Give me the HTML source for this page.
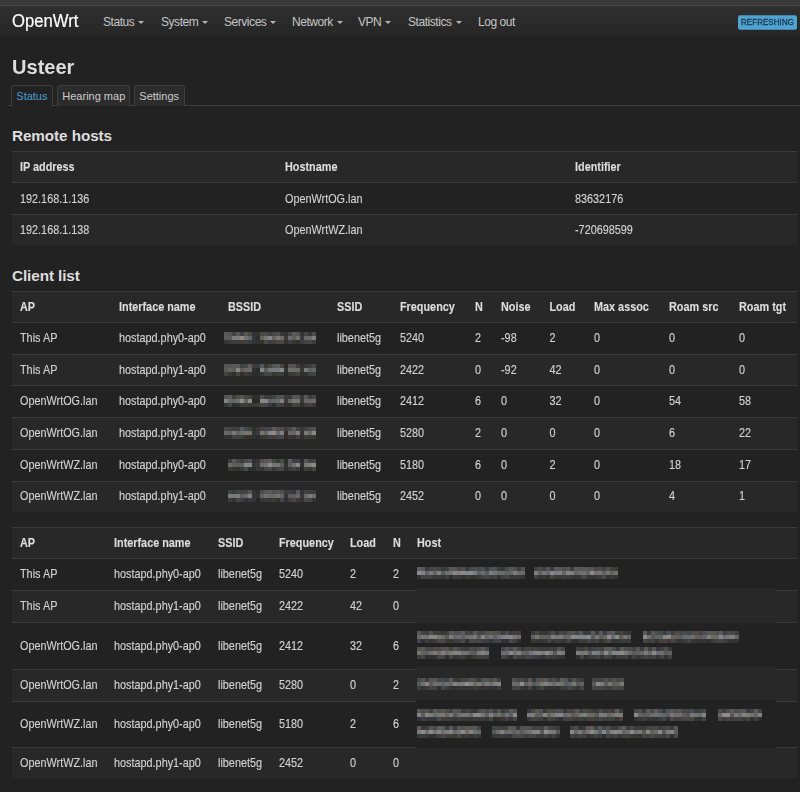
<!DOCTYPE html><html><head><meta charset="utf-8"><style>*{box-sizing:border-box;margin:0;padding:0}
html,body{width:800px;height:792px;overflow:hidden}
body{background:#222;color:#d2d2d2;font-family:"Liberation Sans",sans-serif;font-size:10.85px;position:relative}
.topband{position:absolute;left:0;top:0;width:800px;height:5px;background:#393939}
.topline{position:absolute;left:0;top:5px;width:800px;height:1px;background:#4a4a4a}
.nav{position:absolute;left:0;top:6px;width:800px;height:31px;background:linear-gradient(#2f2f2f,#262626)}
.brand{position:absolute;left:12px;top:10px;font-size:18.7px;color:#fff;line-height:22px;transform:scaleX(0.893);transform-origin:0 0;-webkit-text-stroke:0.2px #fff}
.nl{position:absolute;top:15px;font-size:12px;letter-spacing:-0.45px;color:#c6c6c6;line-height:14px;white-space:nowrap}
.caret{display:inline-block;width:0;height:0;border-left:3px solid transparent;border-right:3px solid transparent;border-top:3px solid #b4b4b4;vertical-align:middle;margin-left:4px;margin-top:-1px}
.badge{position:absolute;left:738px;top:16px;width:59px;height:13px;background:#4ea3d2;border-radius:2px;color:#1b3446;font-size:7.9px;font-weight:normal;line-height:14px;text-align:center;letter-spacing:0.12px;-webkit-text-stroke:0.25px #1b3446;transform:scaleY(1.1)}
h2{position:absolute;left:12px;top:54.7px;font-size:21px;transform:scaleX(0.955);transform-origin:0 0;font-weight:bold;color:#ddd;line-height:24px}
.tabline{position:absolute;left:8px;top:105px;width:792px;height:1px;background:#3e3e3e}
.tab{position:absolute;top:85px;height:21px;border:1px solid #3e3e3e;border-bottom:none;border-radius:3px 3px 0 0;background:#2c2c2c;color:#ccc;font-size:11px;line-height:21px;padding:0 0 0 4.3px;white-space:nowrap}
.tab.active{background:#222;color:#4a9fd0;height:21px}
h3{position:absolute;left:12px;font-size:15.3px;letter-spacing:-0.1px;font-weight:bold;color:#ddd;line-height:18px}
.tbl{position:absolute;left:12px;top:0;width:785px}
.row{position:absolute;left:0;width:785px;border-top:1px solid #3b3b3b}
.row.alt{background:#282828}
.row.hd{background:#282828}
.c{position:absolute;white-space:nowrap;line-height:14px;-webkit-text-stroke:0.12px currentColor;transform:scaleY(1.12);transform-origin:0 10.76px}
.hd .c{font-weight:bold;color:#ddd}
.blur{position:absolute;background:#4b4b4b;filter:blur(1px)}
</style></head><body>
<div class="topband"></div><div class="topline"></div><div class="nav"></div>
<div class="brand">OpenWrt</div>
<div class="nl" style="left:103px">Status<span class="caret"></span></div>
<div class="nl" style="left:161px">System<span class="caret"></span></div>
<div class="nl" style="left:224px">Services<span class="caret"></span></div>
<div class="nl" style="left:292px">Network<span class="caret"></span></div>
<div class="nl" style="left:358px">VPN<span class="caret"></span></div>
<div class="nl" style="left:408px">Statistics<span class="caret"></span></div>
<div class="nl" style="left:478px">Log out</div>
<div class="badge">REFRESHING</div>
<h2>Usteer</h2><div class="tabline"></div>
<div class="tab active" style="left:11px;width:42px">Status</div>
<div class="tab" style="left:57px;width:73px">Hearing map</div>
<div class="tab" style="left:134px;width:51px">Settings</div>
<h3 style="top:127px">Remote hosts</h3>
<h3 style="top:267px">Client list</h3>
<div class="tbl">
<div class="row hd" style="top:151.4px;height:31.0px">
<div class="c" style="left:8px;top:7.60px">IP address</div>
<div class="c" style="left:273px;top:7.60px">Hostname</div>
<div class="c" style="left:563px;top:7.60px">Identifier</div>
</div>
<div class="row" style="top:182.4px;height:32.0px">
<div class="c" style="left:8px;top:8.20px">192.168.1.136</div>
<div class="c" style="left:273px;top:8.20px">OpenWrtOG.lan</div>
<div class="c" style="left:563px;top:8.20px">83632176</div>
</div>
<div class="row alt" style="top:214.4px;height:30.599999999999994px">
<div class="c" style="left:8px;top:7.50px">192.168.1.138</div>
<div class="c" style="left:273px;top:7.50px">OpenWrtWZ.lan</div>
<div class="c" style="left:563px;top:7.50px">-720698599</div>
</div>
</div>
<div class="tbl">
<div class="row hd" style="top:291.3px;height:30.69999999999999px">
<div class="c" style="left:8px;top:7.45px">AP</div>
<div class="c" style="left:107px;top:7.45px">Interface name</div>
<div class="c" style="left:216px;top:7.45px">BSSID</div>
<div class="c" style="left:325px;top:7.45px">SSID</div>
<div class="c" style="left:388px;top:7.45px">Frequency</div>
<div class="c" style="left:463px;top:7.45px">N</div>
<div class="c" style="left:489px;top:7.45px">Noise</div>
<div class="c" style="left:537.5px;top:7.45px">Load</div>
<div class="c" style="left:582px;top:7.45px">Max assoc</div>
<div class="c" style="left:657px;top:7.45px">Roam src</div>
<div class="c" style="left:727px;top:7.45px">Roam tgt</div>
</div>
<div class="row" style="top:322px;height:31.69999999999999px">
<div class="c" style="left:8px;top:8.05px">This AP</div>
<div class="c" style="left:107px;top:8.05px">hostapd.phy0-ap0</div>
<div class="c" style="left:325px;top:8.05px">libenet5g</div>
<div class="c" style="left:388px;top:8.05px">5240</div>
<div class="c" style="left:463px;top:8.05px">2</div>
<div class="c" style="left:489px;top:8.05px">-98</div>
<div class="c" style="left:537.5px;top:8.05px">2</div>
<div class="c" style="left:582px;top:8.05px">0</div>
<div class="c" style="left:657px;top:8.05px">0</div>
<div class="c" style="left:727px;top:8.05px">0</div>
</div>
<div class="row alt" style="top:353.7px;height:31.69999999999999px">
<div class="c" style="left:8px;top:8.05px">This AP</div>
<div class="c" style="left:107px;top:8.05px">hostapd.phy1-ap0</div>
<div class="c" style="left:325px;top:8.05px">libenet5g</div>
<div class="c" style="left:388px;top:8.05px">2422</div>
<div class="c" style="left:463px;top:8.05px">0</div>
<div class="c" style="left:489px;top:8.05px">-92</div>
<div class="c" style="left:537.5px;top:8.05px">42</div>
<div class="c" style="left:582px;top:8.05px">0</div>
<div class="c" style="left:657px;top:8.05px">0</div>
<div class="c" style="left:727px;top:8.05px">0</div>
</div>
<div class="row" style="top:385.4px;height:31.700000000000045px">
<div class="c" style="left:8px;top:8.05px">OpenWrtOG.lan</div>
<div class="c" style="left:107px;top:8.05px">hostapd.phy0-ap0</div>
<div class="c" style="left:325px;top:8.05px">libenet5g</div>
<div class="c" style="left:388px;top:8.05px">2412</div>
<div class="c" style="left:463px;top:8.05px">6</div>
<div class="c" style="left:489px;top:8.05px">0</div>
<div class="c" style="left:537.5px;top:8.05px">32</div>
<div class="c" style="left:582px;top:8.05px">0</div>
<div class="c" style="left:657px;top:8.05px">54</div>
<div class="c" style="left:727px;top:8.05px">58</div>
</div>
<div class="row alt" style="top:417.1px;height:31.69999999999999px">
<div class="c" style="left:8px;top:8.05px">OpenWrtOG.lan</div>
<div class="c" style="left:107px;top:8.05px">hostapd.phy1-ap0</div>
<div class="c" style="left:325px;top:8.05px">libenet5g</div>
<div class="c" style="left:388px;top:8.05px">5280</div>
<div class="c" style="left:463px;top:8.05px">2</div>
<div class="c" style="left:489px;top:8.05px">0</div>
<div class="c" style="left:537.5px;top:8.05px">0</div>
<div class="c" style="left:582px;top:8.05px">0</div>
<div class="c" style="left:657px;top:8.05px">6</div>
<div class="c" style="left:727px;top:8.05px">22</div>
</div>
<div class="row" style="top:448.8px;height:31.69999999999999px">
<div class="c" style="left:8px;top:8.05px">OpenWrtWZ.lan</div>
<div class="c" style="left:107px;top:8.05px">hostapd.phy0-ap0</div>
<div class="c" style="left:325px;top:8.05px">libenet5g</div>
<div class="c" style="left:388px;top:8.05px">5180</div>
<div class="c" style="left:463px;top:8.05px">6</div>
<div class="c" style="left:489px;top:8.05px">0</div>
<div class="c" style="left:537.5px;top:8.05px">2</div>
<div class="c" style="left:582px;top:8.05px">0</div>
<div class="c" style="left:657px;top:8.05px">18</div>
<div class="c" style="left:727px;top:8.05px">17</div>
</div>
<div class="row alt" style="top:480.5px;height:31.5px">
<div class="c" style="left:8px;top:7.95px">OpenWrtWZ.lan</div>
<div class="c" style="left:107px;top:7.95px">hostapd.phy1-ap0</div>
<div class="c" style="left:325px;top:7.95px">libenet5g</div>
<div class="c" style="left:388px;top:7.95px">2452</div>
<div class="c" style="left:463px;top:7.95px">0</div>
<div class="c" style="left:489px;top:7.95px">0</div>
<div class="c" style="left:537.5px;top:7.95px">0</div>
<div class="c" style="left:582px;top:7.95px">0</div>
<div class="c" style="left:657px;top:7.95px">4</div>
<div class="c" style="left:727px;top:7.95px">1</div>
</div>
</div>
<div class="tbl">
<div class="row hd" style="top:527.4px;height:30.600000000000023px">
<div class="c" style="left:8px;top:7.40px">AP</div>
<div class="c" style="left:102px;top:7.40px">Interface name</div>
<div class="c" style="left:206px;top:7.40px">SSID</div>
<div class="c" style="left:267px;top:7.40px">Frequency</div>
<div class="c" style="left:338px;top:7.40px">Load</div>
<div class="c" style="left:381px;top:7.40px">N</div>
<div class="c" style="left:405px;top:7.40px">Host</div>
</div>
<div class="row" style="top:558px;height:32.39999999999998px">
<div class="c" style="left:8px;top:8.40px">This AP</div>
<div class="c" style="left:102px;top:8.40px">hostapd.phy0-ap0</div>
<div class="c" style="left:206px;top:8.40px">libenet5g</div>
<div class="c" style="left:267px;top:8.40px">5240</div>
<div class="c" style="left:338px;top:8.40px">2</div>
<div class="c" style="left:381px;top:8.40px">2</div>
</div>
<div class="row alt" style="top:590.4px;height:31.600000000000023px">
<div class="c" style="left:8px;top:8.00px">This AP</div>
<div class="c" style="left:102px;top:8.00px">hostapd.phy1-ap0</div>
<div class="c" style="left:206px;top:8.00px">libenet5g</div>
<div class="c" style="left:267px;top:8.00px">2422</div>
<div class="c" style="left:338px;top:8.00px">42</div>
<div class="c" style="left:381px;top:8.00px">0</div>
</div>
<div class="row" style="top:622px;height:46.60000000000002px">
<div class="c" style="left:8px;top:15.50px">OpenWrtOG.lan</div>
<div class="c" style="left:102px;top:15.50px">hostapd.phy0-ap0</div>
<div class="c" style="left:206px;top:15.50px">libenet5g</div>
<div class="c" style="left:267px;top:15.50px">2412</div>
<div class="c" style="left:338px;top:15.50px">32</div>
<div class="c" style="left:381px;top:15.50px">6</div>
</div>
<div class="row alt" style="top:668.6px;height:32.19999999999993px">
<div class="c" style="left:8px;top:8.30px">OpenWrtOG.lan</div>
<div class="c" style="left:102px;top:8.30px">hostapd.phy1-ap0</div>
<div class="c" style="left:206px;top:8.30px">libenet5g</div>
<div class="c" style="left:267px;top:8.30px">5280</div>
<div class="c" style="left:338px;top:8.30px">0</div>
<div class="c" style="left:381px;top:8.30px">2</div>
</div>
<div class="row" style="top:700.8px;height:46.5px">
<div class="c" style="left:8px;top:15.45px">OpenWrtWZ.lan</div>
<div class="c" style="left:102px;top:15.45px">hostapd.phy0-ap0</div>
<div class="c" style="left:206px;top:15.45px">libenet5g</div>
<div class="c" style="left:267px;top:15.45px">5180</div>
<div class="c" style="left:338px;top:15.45px">2</div>
<div class="c" style="left:381px;top:15.45px">6</div>
</div>
<div class="row alt" style="top:747.3px;height:31.100000000000023px">
<div class="c" style="left:8px;top:7.75px">OpenWrtWZ.lan</div>
<div class="c" style="left:102px;top:7.75px">hostapd.phy1-ap0</div>
<div class="c" style="left:206px;top:7.75px">libenet5g</div>
<div class="c" style="left:267px;top:7.75px">2452</div>
<div class="c" style="left:338px;top:7.75px">0</div>
<div class="c" style="left:381px;top:7.75px">0</div>
</div>
</div>
<div style="position:absolute;left:416px;top:559px;width:360px;height:28.5px;background:#222"></div>
<div style="position:absolute;left:416px;top:587.5px;width:360px;height:35.5px;background:#282828"></div>
<div style="position:absolute;left:416px;top:623px;width:360px;height:44px;background:#222"></div>
<div style="position:absolute;left:416px;top:667px;width:360px;height:33px;background:#282828"></div>
<div style="position:absolute;left:416px;top:700px;width:360px;height:47.5px;background:#222"></div>
<div style="position:absolute;left:416px;top:747.5px;width:360px;height:30.0px;background:#282828"></div>
<div style="position:absolute;left:224px;top:331.9px;width:92px;height:12px;filter:blur(0.5px)">
<div style="height:4px;background:linear-gradient(90deg,#555b5a 0px 4px,#58554e 4px 8px,#45444a 8px 12px,#545659 12px 16px,#3b4142 16px 20px,#555650 20px 24px,#4b4644 24px 28px,#313537 28px 32px,#343431 32px 36px,#484742 36px 40px,#4e4a48 40px 44px,#403f44 44px 48px,#474648 48px 52px,#494f51 52px 56px,#343732 56px 60px,#33312f 60px 64px,#454649 64px 68px,#5b5a59 68px 72px,#505558 72px 76px,#34322d 76px 80px,#454541 80px 84px,#333939 84px 88px,#4d4a4d 88px 92px)"></div>
<div style="height:4px;background:linear-gradient(90deg,#5e5c63 0px 4px,#595d5c 4px 8px,#7b7c83 8px 12px,#7a7e78 12px 16px,#8f8983 16px 20px,#707479 20px 24px,#636463 24px 28px,#333639 28px 32px,#2f2c2d 32px 36px,#5e6360 36px 40px,#737570 40px 44px,#868288 44px 48px,#69635e 48px 52px,#7c7674 52px 56px,#6c6c68 56px 60px,#3e3932 60px 64px,#6c6d69 64px 68px,#5b5d5d 68px 72px,#74716c 72px 76px,#3b373e 76px 80px,#6c6768 80px 84px,#6b6969 84px 88px,#7f7e78 88px 92px)"></div>
<div style="height:4px;background:linear-gradient(90deg,#353437 0px 4px,#3d3d38 4px 8px,#3e3c3e 8px 12px,#3c3a39 12px 16px,#433e39 16px 20px,#41403a 20px 24px,#363c42 24px 28px,#383630 28px 32px,#2e332e 32px 36px,#353232 36px 40px,#494843 40px 44px,#3d3d42 44px 48px,#403f3d 48px 52px,#44464d 52px 56px,#4d4848 56px 60px,#363233 60px 64px,#3b3f43 64px 68px,#353638 68px 72px,#34302c 72px 76px,#3d3a40 76px 80px,#44433c 80px 84px,#434845 84px 88px,#393c40 88px 92px)"></div>
</div>
<div style="position:absolute;left:224px;top:363.5px;width:92px;height:12px;filter:blur(0.5px)">
<div style="height:4px;background:linear-gradient(90deg,#555359 0px 4px,#555455 4px 8px,#595c57 8px 12px,#58575a 12px 16px,#3d4242 16px 20px,#464a44 20px 24px,#5f5960 24px 28px,#3b3b3b 28px 32px,#353b41 32px 36px,#535851 36px 40px,#363940 40px 44px,#49463f 44px 48px,#535454 48px 52px,#595c5d 52px 56px,#494542 56px 60px,#2c2822 60px 64px,#585451 64px 68px,#535158 68px 72px,#413c39 72px 76px,#312f2c 76px 80px,#33383a 80px 84px,#3d3d37 84px 88px,#494943 88px 92px)"></div>
<div style="height:4px;background:linear-gradient(90deg,#5d5952 0px 4px,#62656c 4px 8px,#5c5b5a 8px 12px,#858584 12px 16px,#5f5c5f 16px 20px,#6a6467 20px 24px,#686963 24px 28px,#2c3231 28px 32px,#272b27 32px 36px,#80857e 36px 40px,#5c5b60 40px 44px,#73777a 44px 48px,#787b7b 48px 52px,#75787c 52px 56px,#858988 56px 60px,#2f3433 60px 64px,#6f726b 64px 68px,#6f696b 68px 72px,#656b67 72px 76px,#373437 76px 80px,#777c75 80px 84px,#5e6161 84px 88px,#62686d 88px 92px)"></div>
<div style="height:4px;background:linear-gradient(90deg,#414248 0px 4px,#383832 4px 8px,#2c312d 8px 12px,#45413d 12px 16px,#322f2d 16px 20px,#3d3a3a 20px 24px,#363333 24px 28px,#2c2c27 28px 32px,#2a2c33 32px 36px,#393632 36px 40px,#434641 40px 44px,#4a4647 44px 48px,#393534 48px 52px,#413e38 52px 56px,#363c36 56px 60px,#2b2926 60px 64px,#3b363a 64px 68px,#393b3a 68px 72px,#43423f 72px 76px,#322d27 76px 80px,#303333 80px 84px,#444046 84px 88px,#45423c 88px 92px)"></div>
</div>
<div style="position:absolute;left:224px;top:395.2px;width:92px;height:12px;filter:blur(0.5px)">
<div style="height:4px;background:linear-gradient(90deg,#535558 0px 4px,#5c5856 4px 8px,#404039 8px 12px,#4f4e4b 12px 16px,#59545a 16px 20px,#47453e 20px 24px,#41403e 24px 28px,#2f322b 28px 32px,#292e2f 32px 36px,#504c4b 36px 40px,#363c43 40px 44px,#3e3a3b 44px 48px,#404544 48px 52px,#4e5356 52px 56px,#4e5253 56px 60px,#3d3b36 60px 64px,#3c3a35 64px 68px,#525756 68px 72px,#555153 72px 76px,#3a3736 76px 80px,#53595c 80px 84px,#393c41 84px 88px,#464745 88px 92px)"></div>
<div style="height:4px;background:linear-gradient(90deg,#848487 0px 4px,#666b68 4px 8px,#666765 8px 12px,#716f71 12px 16px,#918b8c 16px 20px,#5d6362 20px 24px,#8c8c85 24px 28px,#25282b 28px 32px,#292925 32px 36px,#8c8983 36px 40px,#8a8884 40px 44px,#5e6367 44px 48px,#636968 48px 52px,#6a6967 52px 56px,#827e82 56px 60px,#393836 60px 64px,#646562 64px 68px,#767579 68px 72px,#737671 72px 76px,#383934 76px 80px,#6a6468 80px 84px,#69665f 84px 88px,#6f696e 88px 92px)"></div>
<div style="height:4px;background:linear-gradient(90deg,#353935 0px 4px,#424849 4px 8px,#2d3032 8px 12px,#313233 12px 16px,#3b3f38 16px 20px,#3f393c 20px 24px,#3b3731 24px 28px,#3a3838 28px 32px,#3b3c39 32px 36px,#45444b 36px 40px,#424646 40px 44px,#3b383e 44px 48px,#2e302e 48px 52px,#433f43 52px 56px,#423d42 56px 60px,#33312e 60px 64px,#332f28 64px 68px,#3f4540 68px 72px,#3e403f 72px 76px,#2c2f2e 76px 80px,#383e3f 80px 84px,#444145 84px 88px,#3d3730 88px 92px)"></div>
</div>
<div style="position:absolute;left:224px;top:427.0px;width:92px;height:12px;filter:blur(0.5px)">
<div style="height:4px;background:linear-gradient(90deg,#45474a 0px 4px,#46423e 4px 8px,#3d4043 8px 12px,#3e423c 12px 16px,#56595d 16px 20px,#434948 20px 24px,#433f41 24px 28px,#2c302a 28px 32px,#3b3635 32px 36px,#453f46 36px 40px,#46474d 40px 44px,#46454c 44px 48px,#5d5a59 48px 52px,#4e4e51 52px 56px,#4f4b45 56px 60px,#413b3e 60px 64px,#4c4747 64px 68px,#5d5a5e 68px 72px,#403f42 72px 76px,#353936 76px 80px,#3f4344 80px 84px,#4b4d4b 84px 88px,#525456 88px 92px)"></div>
<div style="height:4px;background:linear-gradient(90deg,#696970 0px 4px,#636060 4px 8px,#787b7d 8px 12px,#64676b 12px 16px,#6b6f69 16px 20px,#777376 20px 24px,#75756e 24px 28px,#2f3531 28px 32px,#3d373b 32px 36px,#787471 36px 40px,#676261 40px 44px,#85878e 44px 48px,#8e8886 48px 52px,#69646a 52px 56px,#7f8081 56px 60px,#312c2e 60px 64px,#6c6767 64px 68px,#68655e 68px 72px,#827d7f 72px 76px,#363337 76px 80px,#7b7c77 80px 84px,#676a65 84px 88px,#8e8a8b 88px 92px)"></div>
<div style="height:4px;background:linear-gradient(90deg,#2f322d 0px 4px,#313134 4px 8px,#444247 8px 12px,#454039 12px 16px,#3c3d40 16px 20px,#33312a 20px 24px,#31332d 24px 28px,#2f3133 28px 32px,#2b2a2b 32px 36px,#343a33 36px 40px,#383934 40px 44px,#403e3f 44px 48px,#403f3b 48px 52px,#414441 52px 56px,#424847 56px 60px,#322d28 60px 64px,#37373a 64px 68px,#333534 68px 72px,#3e413f 72px 76px,#322f2c 76px 80px,#393c3f 80px 84px,#3a3a33 84px 88px,#393939 88px 92px)"></div>
</div>
<div style="position:absolute;left:228px;top:458.6px;width:88px;height:12px;filter:blur(0.5px)">
<div style="height:4px;background:linear-gradient(90deg,#403d41 0px 4px,#555855 4px 8px,#45474b 8px 12px,#3f3b3b 12px 16px,#4b4a4d 16px 20px,#505055 20px 24px,#2d3036 24px 28px,#393330 28px 32px,#544e51 32px 36px,#545853 36px 40px,#5e5a5d 40px 44px,#444841 44px 48px,#363b3d 48px 52px,#464c46 52px 56px,#2e2e2d 56px 60px,#5d5c63 60px 64px,#413d40 64px 68px,#413e40 68px 72px,#282d31 72px 76px,#585659 76px 80px,#414343 80px 84px,#454449 84px 88px)"></div>
<div style="height:4px;background:linear-gradient(90deg,#6c6a67 0px 4px,#595e64 4px 8px,#5b5d5a 8px 12px,#595f5a 12px 16px,#878781 16px 20px,#858385 20px 24px,#363538 24px 28px,#393939 28px 32px,#6c6b6b 32px 36px,#737375 36px 40px,#878c89 40px 44px,#767672 44px 48px,#777474 48px 52px,#5f5c57 52px 56px,#333030 56px 60px,#5e5958 60px 64px,#6d7371 64px 68px,#888583 68px 72px,#2f302d 72px 76px,#767972 76px 80px,#828080 80px 84px,#898b85 84px 88px)"></div>
<div style="height:4px;background:linear-gradient(90deg,#363b34 0px 4px,#33352e 4px 8px,#322f30 8px 12px,#3a383f 12px 16px,#474845 16px 20px,#2c322d 20px 24px,#282e2a 24px 28px,#363833 28px 32px,#333638 32px 36px,#434441 36px 40px,#4c464d 40px 44px,#343a3b 44px 48px,#474247 48px 52px,#434748 52px 56px,#2d2e2e 56px 60px,#383b3a 60px 64px,#424045 64px 68px,#3a3940 68px 72px,#26292c 72px 76px,#3d3c41 76px 80px,#343936 80px 84px,#434843 84px 88px)"></div>
</div>
<div style="position:absolute;left:228px;top:490.2px;width:88px;height:12px;filter:blur(0.5px)">
<div style="height:4px;background:linear-gradient(90deg,#3e4445 0px 4px,#353940 4px 8px,#40463f 8px 12px,#45403e 12px 16px,#414644 16px 20px,#595452 20px 24px,#323432 24px 28px,#2d2e33 28px 32px,#484b48 32px 36px,#575753 36px 40px,#5c5b61 40px 44px,#52514b 44px 48px,#575459 48px 52px,#4f4e50 52px 56px,#3d3c3b 56px 60px,#3c3b41 60px 64px,#353833 64px 68px,#55595b 68px 72px,#333131 72px 76px,#3b4047 76px 80px,#3e3e37 80px 84px,#3c3b3f 84px 88px)"></div>
<div style="height:4px;background:linear-gradient(90deg,#797b7a 0px 4px,#757873 4px 8px,#7c7a78 8px 12px,#5a5d5a 12px 16px,#676b71 16px 20px,#7f807f 20px 24px,#333237 24px 28px,#31302b 28px 32px,#635f5f 32px 36px,#707069 36px 40px,#6d6862 40px 44px,#656a63 44px 48px,#6e7471 48px 52px,#636264 52px 56px,#313738 56px 60px,#5c5b61 60px 64px,#605d5d 64px 68px,#6c666b 68px 72px,#3b363a 72px 76px,#6c6862 76px 80px,#797f78 80px 84px,#736d70 84px 88px)"></div>
<div style="height:4px;background:linear-gradient(90deg,#3b3b39 0px 4px,#333037 4px 8px,#434547 8px 12px,#3b3d3e 12px 16px,#352f2e 16px 20px,#353b42 20px 24px,#363332 24px 28px,#242825 28px 32px,#373637 32px 36px,#383940 36px 40px,#3a3638 40px 44px,#3a3937 44px 48px,#322f2d 48px 52px,#424543 52px 56px,#312d33 56px 60px,#443f39 60px 64px,#494645 64px 68px,#353937 68px 72px,#313232 72px 76px,#494647 76px 80px,#434244 80px 84px,#323239 84px 88px)"></div>
</div>
<div style="position:absolute;left:417px;top:567.0px;width:108px;height:12px;filter:blur(0.5px)">
<div style="height:4px;background:linear-gradient(90deg,#595c63 0px 4px,#585959 4px 8px,#3e3a3b 8px 12px,#474440 12px 16px,#4a494d 16px 20px,#434444 20px 24px,#393b37 24px 28px,#3c4141 28px 32px,#585955 32px 36px,#5b5553 36px 40px,#4a464b 40px 44px,#50504c 44px 48px,#3b3b3b 48px 52px,#474a44 52px 56px,#504c52 56px 60px,#48484d 60px 64px,#4c4f4e 64px 68px,#3b3b3f 68px 72px,#4b5157 72px 76px,#515455 76px 80px,#3c3d42 80px 84px,#37383c 84px 88px,#484e4b 88px 92px,#575b54 92px 96px,#4e524f 96px 100px,#413b36 100px 104px,#545054 104px 108px)"></div>
<div style="height:4px;background:linear-gradient(90deg,#8b8c93 0px 4px,#848181 4px 8px,#636268 8px 12px,#76787e 12px 16px,#686364 16px 20px,#7d837d 20px 24px,#565c5e 24px 28px,#706e72 28px 32px,#6f7477 32px 36px,#88858a 36px 40px,#847e7e 40px 44px,#8e8a85 44px 48px,#7f838a 48px 52px,#878a8e 52px 56px,#7c7b82 56px 60px,#5b605b 60px 64px,#6a6b6a 64px 68px,#565c5d 68px 72px,#807b79 72px 76px,#6f7571 76px 80px,#6d696f 80px 84px,#676c69 84px 88px,#5f6161 88px 92px,#65655f 92px 96px,#7f7980 96px 100px,#696c66 100px 104px,#6d6970 104px 108px)"></div>
<div style="height:4px;background:linear-gradient(90deg,#2e342d 0px 4px,#434349 4px 8px,#434245 8px 12px,#3b4146 12px 16px,#36393e 16px 20px,#38373a 20px 24px,#373537 24px 28px,#3f403e 28px 32px,#2b2f2c 32px 36px,#3e3a38 36px 40px,#3b3b3e 40px 44px,#35302c 44px 48px,#3a3f3b 48px 52px,#37332d 52px 56px,#32332d 56px 60px,#343a3a 60px 64px,#414447 64px 68px,#48444a 68px 72px,#3c3a3d 72px 76px,#45433f 76px 80px,#343334 80px 84px,#3f403d 84px 88px,#424448 88px 92px,#34373e 92px 96px,#393c3c 96px 100px,#3e3831 100px 104px,#303638 104px 108px)"></div>
</div>
<div style="position:absolute;left:534px;top:567.0px;width:84px;height:12px;filter:blur(0.5px)">
<div style="height:4px;background:linear-gradient(90deg,#444042 0px 4px,#494d4e 4px 8px,#42423f 8px 12px,#555254 12px 16px,#3e393a 16px 20px,#5c595d 20px 24px,#54585c 24px 28px,#504f4b 28px 32px,#535751 32px 36px,#3f3a35 36px 40px,#5c5b62 40px 44px,#54575b 44px 48px,#5a5853 48px 52px,#595655 52px 56px,#59554f 56px 60px,#494640 60px 64px,#4c4c50 64px 68px,#454342 68px 72px,#52524d 72px 76px,#40413d 76px 80px,#3e3b37 80px 84px)"></div>
<div style="height:4px;background:linear-gradient(90deg,#7e807f 0px 4px,#626062 4px 8px,#787479 8px 12px,#68696c 12px 16px,#88878a 16px 20px,#7b7a80 20px 24px,#828083 24px 28px,#656561 28px 32px,#848789 32px 36px,#7f7d7f 36px 40px,#646268 40px 44px,#716f68 44px 48px,#6c7171 48px 52px,#61635d 52px 56px,#8b8990 56px 60px,#75706d 60px 64px,#767279 64px 68px,#606361 68px 72px,#717477 72px 76px,#5f6263 76px 80px,#6e726d 80px 84px)"></div>
<div style="height:4px;background:linear-gradient(90deg,#434243 0px 4px,#303630 4px 8px,#363633 8px 12px,#2e332d 12px 16px,#434740 16px 20px,#3a3c3a 20px 24px,#3c3737 24px 28px,#413c38 28px 32px,#393c3f 32px 36px,#3d383b 36px 40px,#2f3535 40px 44px,#3b353a 44px 48px,#49484a 48px 52px,#393539 52px 56px,#343630 56px 60px,#3a3438 60px 64px,#3f3b41 64px 68px,#4b4747 68px 72px,#2d3330 72px 76px,#373733 76px 80px,#383433 80px 84px)"></div>
</div>
<div style="position:absolute;left:417px;top:631.0px;width:104px;height:12px;filter:blur(0.5px)">
<div style="height:4px;background:linear-gradient(90deg,#595458 0px 4px,#49443e 4px 8px,#423e3d 8px 12px,#53545a 12px 16px,#3f3e38 16px 20px,#3c3f41 20px 24px,#323834 24px 28px,#423d38 28px 32px,#565853 32px 36px,#565153 36px 40px,#4e5156 40px 44px,#615b61 44px 48px,#414644 48px 52px,#46433f 52px 56px,#58575d 56px 60px,#4c4744 60px 64px,#4a4445 64px 68px,#565450 68px 72px,#565851 72px 76px,#515550 76px 80px,#53514e 80px 84px,#3e3d44 84px 88px,#484d53 88px 92px,#3a3c3c 92px 96px,#413e43 96px 100px,#423d3c 100px 104px)"></div>
<div style="height:4px;background:linear-gradient(90deg,#646a6b 0px 4px,#797678 4px 8px,#717177 8px 12px,#878683 12px 16px,#828782 16px 20px,#7a746d 20px 24px,#706c69 24px 28px,#5a5854 28px 32px,#797c7e 32px 36px,#63666d 36px 40px,#6c7072 40px 44px,#615d60 44px 48px,#6a7070 48px 52px,#74756f 52px 56px,#777b7e 56px 60px,#595a57 60px 64px,#878389 64px 68px,#686660 68px 72px,#737574 72px 76px,#5f6360 76px 80px,#716f75 80px 84px,#787e82 84px 88px,#837f85 88px 92px,#868285 92px 96px,#767772 96px 100px,#716d70 100px 104px)"></div>
<div style="height:4px;background:linear-gradient(90deg,#41464c 0px 4px,#322f36 4px 8px,#3f3b3f 8px 12px,#343433 12px 16px,#3e383e 16px 20px,#46484a 20px 24px,#4b4647 24px 28px,#393936 28px 32px,#393730 32px 36px,#413b3d 36px 40px,#3c3d42 40px 44px,#4e4847 44px 48px,#2f3333 48px 52px,#48474e 52px 56px,#474445 56px 60px,#4a444b 60px 64px,#3b413b 64px 68px,#383e44 68px 72px,#353935 72px 76px,#434246 76px 80px,#44444a 80px 84px,#303235 84px 88px,#332f31 88px 92px,#4c4849 92px 96px,#3b4042 96px 100px,#2c3037 100px 104px)"></div>
</div>
<div style="position:absolute;left:531px;top:631.0px;width:100px;height:12px;filter:blur(0.5px)">
<div style="height:4px;background:linear-gradient(90deg,#35383c 0px 4px,#454543 4px 8px,#3c3732 8px 12px,#343832 12px 16px,#3b403a 16px 20px,#4b4c4f 20px 24px,#373a3c 24px 28px,#474745 28px 32px,#45413e 32px 36px,#4b5151 36px 40px,#55534f 40px 44px,#43474d 44px 48px,#555b55 48px 52px,#3c393e 52px 56px,#3a3e3b 56px 60px,#5a5a58 60px 64px,#3a3b3d 64px 68px,#56595f 68px 72px,#373d41 72px 76px,#5a5459 76px 80px,#5b5a5d 80px 84px,#3c3f3a 84px 88px,#44423d 88px 92px,#3b3938 92px 96px,#353939 96px 100px)"></div>
<div style="height:4px;background:linear-gradient(90deg,#5f6264 0px 4px,#6f746d 4px 8px,#5c615a 8px 12px,#65605c 12px 16px,#5a5f5f 16px 20px,#817f83 20px 24px,#767278 24px 28px,#7c7b7c 28px 32px,#696463 32px 36px,#656b71 36px 40px,#8d8881 40px 44px,#878687 44px 48px,#828084 48px 52px,#808688 52px 56px,#848a87 56px 60px,#56595e 60px 64px,#787771 64px 68px,#5a5d5f 68px 72px,#6a6761 72px 76px,#8f8c8f 76px 80px,#666b6d 80px 84px,#878b8e 84px 88px,#605c55 88px 92px,#777278 92px 96px,#616564 96px 100px)"></div>
<div style="height:4px;background:linear-gradient(90deg,#3b3934 0px 4px,#313631 4px 8px,#32353b 8px 12px,#39363b 12px 16px,#404549 16px 20px,#39352e 20px 24px,#3d3b3f 24px 28px,#383637 28px 32px,#373632 32px 36px,#46453e 36px 40px,#2f3133 40px 44px,#31312d 44px 48px,#3b4039 48px 52px,#383e3d 52px 56px,#44474e 56px 60px,#3e3b40 60px 64px,#43423f 64px 68px,#33312c 68px 72px,#3e3f38 72px 76px,#4a474e 76px 80px,#35342d 80px 84px,#363431 84px 88px,#363c39 88px 92px,#3c3a41 92px 96px,#373d41 96px 100px)"></div>
</div>
<div style="position:absolute;left:643px;top:631.0px;width:96px;height:12px;filter:blur(0.5px)">
<div style="height:4px;background:linear-gradient(90deg,#5b5c5e 0px 4px,#373d3a 4px 8px,#5e585a 8px 12px,#4a4c47 12px 16px,#494d52 16px 20px,#3b4043 20px 24px,#4f5057 24px 28px,#414143 28px 32px,#504f4f 32px 36px,#4a4540 36px 40px,#4c4a51 40px 44px,#41474e 44px 48px,#4e4b45 48px 52px,#524d52 52px 56px,#474249 56px 60px,#525057 60px 64px,#5a575c 64px 68px,#595657 68px 72px,#524f4c 72px 76px,#5d585f 76px 80px,#413e3d 80px 84px,#4b4d51 84px 88px,#4a4742 88px 92px,#403e3e 92px 96px)"></div>
<div style="height:4px;background:linear-gradient(90deg,#8a8a90 0px 4px,#716e73 4px 8px,#5a5854 8px 12px,#5f6567 12px 16px,#626368 16px 20px,#868686 20px 24px,#8c898a 24px 28px,#66625b 28px 32px,#615c5f 32px 36px,#5b5c5e 36px 40px,#696b6e 40px 44px,#6b676e 44px 48px,#6f6f6c 48px 52px,#635d57 52px 56px,#5f5e63 56px 60px,#626268 60px 64px,#7e7f79 64px 68px,#6d6760 68px 72px,#676a66 72px 76px,#83888e 76px 80px,#6b6f73 80px 84px,#767980 84px 88px,#7d7f7c 88px 92px,#605f65 92px 96px)"></div>
<div style="height:4px;background:linear-gradient(90deg,#464445 0px 4px,#443e37 4px 8px,#3e4246 8px 12px,#39332f 12px 16px,#46413a 16px 20px,#484343 20px 24px,#3f3935 24px 28px,#4a4442 28px 32px,#393a33 32px 36px,#343538 36px 40px,#3a3b3e 40px 44px,#434844 44px 48px,#34363d 48px 52px,#37312e 52px 56px,#373134 56px 60px,#2f3538 60px 64px,#32302a 64px 68px,#3f3a34 68px 72px,#434449 72px 76px,#454444 76px 80px,#423e3e 80px 84px,#35342d 84px 88px,#332f35 88px 92px,#31333a 92px 96px)"></div>
</div>
<div style="position:absolute;left:417px;top:647.0px;width:72px;height:12px;filter:blur(0.5px)">
<div style="height:4px;background:linear-gradient(90deg,#4f5556 0px 4px,#595851 4px 8px,#4d4741 8px 12px,#494343 12px 16px,#4e4e4e 16px 20px,#4e4945 20px 24px,#525458 24px 28px,#595550 28px 32px,#404240 32px 36px,#555650 36px 40px,#484947 40px 44px,#3e4241 44px 48px,#363c36 48px 52px,#464b4f 52px 56px,#484246 56px 60px,#4f4e52 60px 64px,#585a5c 64px 68px,#484747 68px 72px)"></div>
<div style="height:4px;background:linear-gradient(90deg,#70736e 0px 4px,#62615d 4px 8px,#5e615d 8px 12px,#6f6c73 12px 16px,#787b76 16px 20px,#6a6c67 20px 24px,#837d80 24px 28px,#706e6e 28px 32px,#7a7a76 32px 36px,#81817d 36px 40px,#82807e 40px 44px,#767073 44px 48px,#747074 48px 52px,#5c6062 52px 56px,#5f5a58 56px 60px,#7c7a74 60px 64px,#80858a 64px 68px,#7f7a7e 68px 72px)"></div>
<div style="height:4px;background:linear-gradient(90deg,#3f3e3f 0px 4px,#434647 4px 8px,#2c2f36 8px 12px,#373231 12px 16px,#31322e 16px 20px,#464844 20px 24px,#44484b 24px 28px,#2a2f30 28px 32px,#444649 32px 36px,#323735 36px 40px,#373d3c 40px 44px,#413f3b 44px 48px,#30322f 48px 52px,#2e3029 52px 56px,#3b3e3b 56px 60px,#40443d 60px 64px,#41423b 64px 68px,#3b3f42 68px 72px)"></div>
</div>
<div style="position:absolute;left:501px;top:647.0px;width:64px;height:12px;filter:blur(0.5px)">
<div style="height:4px;background:linear-gradient(90deg,#494648 0px 4px,#535257 4px 8px,#464a49 8px 12px,#5f5953 12px 16px,#454749 16px 20px,#3e393c 20px 24px,#474844 24px 28px,#45423e 28px 32px,#454041 32px 36px,#3c3f3d 36px 40px,#393e39 40px 44px,#3c3b37 44px 48px,#41403d 48px 52px,#393c39 52px 56px,#525258 56px 60px,#414648 60px 64px)"></div>
<div style="height:4px;background:linear-gradient(90deg,#6b6b72 0px 4px,#706a67 4px 8px,#83898f 8px 12px,#767178 12px 16px,#848681 16px 20px,#636668 20px 24px,#615e63 24px 28px,#717479 28px 32px,#84807c 32px 36px,#818388 36px 40px,#77767b 40px 44px,#8d8b92 44px 48px,#797876 48px 52px,#58585f 52px 56px,#827f78 56px 60px,#77777d 60px 64px)"></div>
<div style="height:4px;background:linear-gradient(90deg,#414649 0px 4px,#3e3f3c 4px 8px,#2c2f2e 8px 12px,#4b4647 12px 16px,#40423f 16px 20px,#3b3b3e 20px 24px,#43444b 24px 28px,#47444b 28px 32px,#3c3f46 32px 36px,#3b3b3a 36px 40px,#333337 40px 44px,#433d42 44px 48px,#3f3c3f 48px 52px,#413c36 52px 56px,#343833 56px 60px,#35312c 60px 64px)"></div>
</div>
<div style="position:absolute;left:576px;top:647.0px;width:96px;height:12px;filter:blur(0.5px)">
<div style="height:4px;background:linear-gradient(90deg,#443f45 0px 4px,#403c3b 4px 8px,#484844 8px 12px,#3a3c38 12px 16px,#3f4246 16px 20px,#484b45 20px 24px,#3e434a 24px 28px,#5a5a54 28px 32px,#58595c 32px 36px,#4c4f52 36px 40px,#3f3a3e 40px 44px,#5c5b54 44px 48px,#534d51 48px 52px,#504c48 52px 56px,#454348 56px 60px,#53564f 60px 64px,#3c3b42 64px 68px,#565b5a 68px 72px,#41423e 72px 76px,#585356 76px 80px,#36373c 80px 84px,#3f4244 84px 88px,#504e49 88px 92px,#35383d 92px 96px)"></div>
<div style="height:4px;background:linear-gradient(90deg,#837d7d 0px 4px,#747771 4px 8px,#7d7974 8px 12px,#605b62 12px 16px,#7b7f86 16px 20px,#787c7a 20px 24px,#626862 24px 28px,#908a8d 28px 32px,#686c6b 32px 36px,#818787 36px 40px,#858583 40px 44px,#888a8e 44px 48px,#7b7a74 48px 52px,#6c6a69 52px 56px,#5b5b5b 56px 60px,#5f635e 60px 64px,#666467 64px 68px,#797d7c 68px 72px,#61676c 72px 76px,#898a84 76px 80px,#6f6a71 80px 84px,#6b7070 84px 88px,#5e5c58 88px 92px,#656162 92px 96px)"></div>
<div style="height:4px;background:linear-gradient(90deg,#2b3031 0px 4px,#494344 4px 8px,#2d3238 8px 12px,#403a3a 12px 16px,#3c3c3b 16px 20px,#42434a 20px 24px,#383234 24px 28px,#41454a 28px 32px,#43403f 32px 36px,#322f36 36px 40px,#3a3e41 40px 44px,#3f3c36 44px 48px,#414043 48px 52px,#2c3134 52px 56px,#433e45 56px 60px,#38352f 60px 64px,#3c3c3d 64px 68px,#464346 68px 72px,#3b403f 72px 76px,#424243 76px 80px,#363434 80px 84px,#48433d 84px 88px,#2f3433 88px 92px,#3f453e 92px 96px)"></div>
</div>
<div style="position:absolute;left:417px;top:678.0px;width:84px;height:12px;filter:blur(0.5px)">
<div style="height:4px;background:linear-gradient(90deg,#454848 0px 4px,#55534c 4px 8px,#3a3d3e 8px 12px,#545658 12px 16px,#53585d 16px 20px,#474647 20px 24px,#48484e 24px 28px,#3f4148 28px 32px,#5c5a58 32px 36px,#3d3b36 36px 40px,#3c3735 40px 44px,#3f4345 44px 48px,#424248 48px 52px,#4f5352 52px 56px,#4a4e49 56px 60px,#3e3932 60px 64px,#505053 64px 68px,#50555b 68px 72px,#4d4844 72px 76px,#565456 76px 80px,#423e45 80px 84px)"></div>
<div style="height:4px;background:linear-gradient(90deg,#595b5b 0px 4px,#716e73 4px 8px,#84838a 8px 12px,#5f5952 12px 16px,#6d7272 16px 20px,#716b70 20px 24px,#63646a 24px 28px,#6e7173 28px 32px,#696861 32px 36px,#838288 36px 40px,#787875 40px 44px,#7a7d7e 44px 48px,#8f8c90 48px 52px,#84817b 52px 56px,#686d67 56px 60px,#7a7d76 60px 64px,#6e6866 64px 68px,#787c82 68px 72px,#6a6e6b 72px 76px,#7b7f7c 76px 80px,#868686 80px 84px)"></div>
<div style="height:4px;background:linear-gradient(90deg,#403f3f 0px 4px,#31363a 4px 8px,#3d373e 8px 12px,#4a4544 12px 16px,#3f443d 16px 20px,#2b312d 20px 24px,#424646 24px 28px,#423d37 28px 32px,#2e3235 32px 36px,#322f2e 36px 40px,#39332d 40px 44px,#393339 44px 48px,#2f3438 48px 52px,#2f3434 52px 56px,#3f3b3d 56px 60px,#3a3432 60px 64px,#332f2c 64px 68px,#32362f 68px 72px,#303134 72px 76px,#2c3036 76px 80px,#393c3f 80px 84px)"></div>
</div>
<div style="position:absolute;left:512px;top:678.0px;width:72px;height:12px;filter:blur(0.5px)">
<div style="height:4px;background:linear-gradient(90deg,#554f55 0px 4px,#464646 4px 8px,#4c4849 8px 12px,#3d3b3a 12px 16px,#56575b 16px 20px,#34393f 20px 24px,#525752 24px 28px,#57534c 28px 32px,#58585a 32px 36px,#434542 36px 40px,#4d4e4f 40px 44px,#3d3d44 44px 48px,#605a61 48px 52px,#52545b 52px 56px,#3c3f3c 56px 60px,#52514d 60px 64px,#43423e 64px 68px,#3d3c3a 68px 72px)"></div>
<div style="height:4px;background:linear-gradient(90deg,#6a6d68 0px 4px,#676b67 4px 8px,#928c89 8px 12px,#5d6365 12px 16px,#6e6964 16px 20px,#595857 20px 24px,#616464 24px 28px,#797876 28px 32px,#858081 32px 36px,#777871 36px 40px,#6b6b6a 40px 44px,#737977 44px 48px,#6e736d 48px 52px,#5e5d5e 52px 56px,#5e6269 56px 60px,#757a73 60px 64px,#55595e 64px 68px,#65605b 68px 72px)"></div>
<div style="height:4px;background:linear-gradient(90deg,#3e4345 0px 4px,#464448 4px 8px,#323839 8px 12px,#2e3132 12px 16px,#47413b 16px 20px,#292f33 20px 24px,#3a352e 24px 28px,#3e4442 28px 32px,#35332d 32px 36px,#303137 36px 40px,#332f29 40px 44px,#302f29 44px 48px,#363939 48px 52px,#3d3d3e 52px 56px,#444649 56px 60px,#3a3d3a 60px 64px,#363430 64px 68px,#464348 68px 72px)"></div>
</div>
<div style="position:absolute;left:592px;top:678.0px;width:32px;height:12px;filter:blur(0.5px)">
<div style="height:4px;background:linear-gradient(90deg,#434444 0px 4px,#434342 4px 8px,#45413d 8px 12px,#53514d 12px 16px,#464242 16px 20px,#515155 20px 24px,#484844 24px 28px,#4e4d52 28px 32px)"></div>
<div style="height:4px;background:linear-gradient(90deg,#595a5d 0px 4px,#8c8884 4px 8px,#7d7c7b 8px 12px,#5c5c61 12px 16px,#737875 16px 20px,#5d5e5e 20px 24px,#646561 24px 28px,#7e7871 28px 32px)"></div>
<div style="height:4px;background:linear-gradient(90deg,#3f4544 0px 4px,#454346 4px 8px,#434549 8px 12px,#3f3e44 12px 16px,#403e38 16px 20px,#49454a 20px 24px,#494641 24px 28px,#414742 28px 32px)"></div>
</div>
<div style="position:absolute;left:417px;top:709.0px;width:100px;height:12px;filter:blur(0.5px)">
<div style="height:4px;background:linear-gradient(90deg,#595557 0px 4px,#4f4a4a 4px 8px,#575154 8px 12px,#40413d 12px 16px,#595851 16px 20px,#524f4b 20px 24px,#555451 24px 28px,#4a4d49 28px 32px,#464141 32px 36px,#575857 36px 40px,#4e5049 40px 44px,#363b3e 44px 48px,#434544 48px 52px,#3f3c43 52px 56px,#323733 56px 60px,#4b4748 60px 64px,#4f555c 64px 68px,#4b474c 68px 72px,#545259 72px 76px,#3f4142 76px 80px,#4e5253 80px 84px,#3a3d3f 84px 88px,#444749 88px 92px,#585c5b 92px 96px,#4d5052 96px 100px)"></div>
<div style="height:4px;background:linear-gradient(90deg,#808488 0px 4px,#5b5c60 4px 8px,#86837d 8px 12px,#787d7e 12px 16px,#676c71 16px 20px,#717676 20px 24px,#7a7873 24px 28px,#636861 28px 32px,#7e797d 32px 36px,#5c5856 36px 40px,#6d6f6e 40px 44px,#75767c 44px 48px,#75787b 48px 52px,#666b65 52px 56px,#8d8a85 56px 60px,#8e8988 60px 64px,#79736d 64px 68px,#5f605f 68px 72px,#807e83 72px 76px,#656563 76px 80px,#70716c 80px 84px,#5b5b5c 84px 88px,#746e6e 88px 92px,#5c5a5f 92px 96px,#888a87 96px 100px)"></div>
<div style="height:4px;background:linear-gradient(90deg,#322f35 0px 4px,#3e3d43 4px 8px,#3b373c 8px 12px,#33393c 12px 16px,#34383e 16px 20px,#4d4845 20px 24px,#3e3d3f 24px 28px,#413c3c 28px 32px,#393d3c 32px 36px,#383638 36px 40px,#393d3e 40px 44px,#36383d 44px 48px,#3d3834 48px 52px,#393530 52px 56px,#3b3e3c 56px 60px,#353a3c 60px 64px,#3a3d3c 64px 68px,#3a3831 68px 72px,#484340 72px 76px,#2a2f2b 76px 80px,#363031 80px 84px,#3b3634 84px 88px,#3e4245 88px 92px,#353539 92px 96px,#464648 96px 100px)"></div>
</div>
<div style="position:absolute;left:527px;top:709.0px;width:96px;height:12px;filter:blur(0.5px)">
<div style="height:4px;background:linear-gradient(90deg,#3c383e 0px 4px,#424848 4px 8px,#595a56 8px 12px,#4c5258 12px 16px,#393b36 16px 20px,#4b4a47 20px 24px,#4a4a48 24px 28px,#4d5050 28px 32px,#4d4f53 32px 36px,#3b3937 36px 40px,#454247 40px 44px,#484542 44px 48px,#5a5656 48px 52px,#3f4140 52px 56px,#4c4844 56px 60px,#48433c 60px 64px,#3a3934 64px 68px,#3e393b 68px 72px,#4c4a50 72px 76px,#3b3f38 76px 80px,#474141 80px 84px,#3e3c36 84px 88px,#5c585a 88px 92px,#3b3e3c 92px 96px)"></div>
<div style="height:4px;background:linear-gradient(90deg,#7d7a80 0px 4px,#7c7e79 4px 8px,#605b5b 8px 12px,#635e65 12px 16px,#858285 16px 20px,#6a6763 20px 24px,#737670 24px 28px,#868087 28px 32px,#84888d 32px 36px,#6c6966 36px 40px,#6c6f74 40px 44px,#605c57 44px 48px,#69635f 48px 52px,#73777a 52px 56px,#7b7e7b 56px 60px,#696a6f 60px 64px,#6c6760 64px 68px,#595955 68px 72px,#7d7d7c 72px 76px,#787c7a 76px 80px,#64655e 80px 84px,#717070 84px 88px,#7d7e80 88px 92px,#7a7974 92px 96px)"></div>
<div style="height:4px;background:linear-gradient(90deg,#38373d 0px 4px,#444742 4px 8px,#3f423e 8px 12px,#3b3e3e 12px 16px,#323434 16px 20px,#444344 20px 24px,#45413e 24px 28px,#393837 28px 32px,#2f3037 32px 36px,#454247 36px 40px,#454249 40px 44px,#433e3a 44px 48px,#3b3a37 48px 52px,#3c4242 52px 56px,#353a37 56px 60px,#443f3a 60px 64px,#40433c 64px 68px,#3d3f3a 68px 72px,#484444 72px 76px,#3d3f43 76px 80px,#3b413f 80px 84px,#3e3f3c 84px 88px,#373330 88px 92px,#464240 92px 96px)"></div>
</div>
<div style="position:absolute;left:634px;top:709.0px;width:72px;height:12px;filter:blur(0.5px)">
<div style="height:4px;background:linear-gradient(90deg,#494640 0px 4px,#504c48 4px 8px,#363a3b 8px 12px,#5c5859 12px 16px,#4c4943 16px 20px,#5f5960 20px 24px,#4d4e52 24px 28px,#383d44 28px 32px,#54544e 32px 36px,#56585f 36px 40px,#504e54 40px 44px,#555252 44px 48px,#464548 48px 52px,#444547 52px 56px,#4e4a51 56px 60px,#383d43 60px 64px,#423f42 64px 68px,#464742 68px 72px)"></div>
<div style="height:4px;background:linear-gradient(90deg,#8a888d 0px 4px,#656462 4px 8px,#5f5d58 8px 12px,#5c5e64 12px 16px,#676d69 16px 20px,#6e7370 20px 24px,#686d69 24px 28px,#646767 28px 32px,#595d5f 32px 36px,#7c7675 36px 40px,#6d6e68 40px 44px,#6e6e70 44px 48px,#625c57 48px 52px,#565859 52px 56px,#747a7c 56px 60px,#717770 60px 64px,#6b6c69 64px 68px,#7f8585 68px 72px)"></div>
<div style="height:4px;background:linear-gradient(90deg,#313339 0px 4px,#393738 4px 8px,#3e3d44 8px 12px,#363730 12px 16px,#383237 16px 20px,#353330 20px 24px,#363b41 24px 28px,#444344 28px 32px,#323134 32px 36px,#4c4746 36px 40px,#40403c 40px 44px,#433d3f 44px 48px,#48464a 48px 52px,#444843 52px 56px,#4a4746 56px 60px,#373238 60px 64px,#2f3030 64px 68px,#454245 68px 72px)"></div>
</div>
<div style="position:absolute;left:718px;top:709.0px;width:44px;height:12px;filter:blur(0.5px)">
<div style="height:4px;background:linear-gradient(90deg,#46494e 0px 4px,#403e38 4px 8px,#524c52 8px 12px,#585a5d 12px 16px,#4d4947 16px 20px,#4f5556 20px 24px,#565a55 24px 28px,#37393f 28px 32px,#434246 32px 36px,#595c57 36px 40px,#3e4243 40px 44px)"></div>
<div style="height:4px;background:linear-gradient(90deg,#6b6560 0px 4px,#8e8a90 4px 8px,#908b8a 8px 12px,#5d5854 12px 16px,#78797b 16px 20px,#6d676e 20px 24px,#86817e 24px 28px,#7b7e7b 28px 32px,#717273 32px 36px,#656467 36px 40px,#83847f 40px 44px)"></div>
<div style="height:4px;background:linear-gradient(90deg,#4a4749 0px 4px,#403b3d 4px 8px,#494448 8px 12px,#3b3d39 12px 16px,#433f3a 16px 20px,#414243 20px 24px,#393738 24px 28px,#46433e 28px 32px,#34302a 32px 36px,#3f3c39 36px 40px,#292f2a 40px 44px)"></div>
</div>
<div style="position:absolute;left:417px;top:725.5px;width:64px;height:12px;filter:blur(0.5px)">
<div style="height:4px;background:linear-gradient(90deg,#5e5956 0px 4px,#3d373a 4px 8px,#433e39 8px 12px,#565551 12px 16px,#48484f 16px 20px,#5c5c62 20px 24px,#565b5b 24px 28px,#3a3b40 28px 32px,#575858 32px 36px,#3c3a3f 36px 40px,#53585e 40px 44px,#51504b 44px 48px,#585954 48px 52px,#585650 52px 56px,#585759 56px 60px,#474443 60px 64px)"></div>
<div style="height:4px;background:linear-gradient(90deg,#787a7e 0px 4px,#8b8c92 4px 8px,#6b7170 8px 12px,#8f8b84 12px 16px,#757176 16px 20px,#88837f 20px 24px,#726d6f 24px 28px,#7b8079 28px 32px,#848482 32px 36px,#676a68 36px 40px,#767671 40px 44px,#8f8a90 44px 48px,#706b64 48px 52px,#888382 52px 56px,#6b7069 56px 60px,#646a65 60px 64px)"></div>
<div style="height:4px;background:linear-gradient(90deg,#373932 0px 4px,#383e39 4px 8px,#393737 8px 12px,#322f31 12px 16px,#353430 16px 20px,#41403f 20px 24px,#48464d 24px 28px,#413d3c 28px 32px,#3d3f3d 32px 36px,#3e3b34 36px 40px,#4c4741 40px 44px,#393532 44px 48px,#3c3a38 48px 52px,#313237 52px 56px,#3b3d44 56px 60px,#3b3835 60px 64px)"></div>
</div>
<div style="position:absolute;left:492px;top:725.5px;width:68px;height:12px;filter:blur(0.5px)">
<div style="height:4px;background:linear-gradient(90deg,#424641 0px 4px,#44444a 4px 8px,#434140 8px 12px,#433e3f 12px 16px,#5a5b59 16px 20px,#5a5457 20px 24px,#353937 24px 28px,#4d524d 28px 32px,#525255 32px 36px,#52524b 36px 40px,#464140 40px 44px,#454246 44px 48px,#414044 48px 52px,#5b5a59 52px 56px,#414543 56px 60px,#413e45 60px 64px,#3f3c3e 64px 68px)"></div>
<div style="height:4px;background:linear-gradient(90deg,#535955 0px 4px,#6c6d6c 4px 8px,#7f817f 8px 12px,#6b6b6c 12px 16px,#6a6d71 16px 20px,#60615a 20px 24px,#67696a 24px 28px,#5d5a5a 28px 32px,#666c69 32px 36px,#6e747b 36px 40px,#878180 40px 44px,#83878c 44px 48px,#5c5b5c 48px 52px,#8d8c8f 52px 56px,#817c79 56px 60px,#7a7877 60px 64px,#545960 64px 68px)"></div>
<div style="height:4px;background:linear-gradient(90deg,#35383a 0px 4px,#393b35 4px 8px,#413d3a 8px 12px,#33393c 12px 16px,#333537 16px 20px,#464541 20px 24px,#4d484f 24px 28px,#4b464d 28px 32px,#383d41 32px 36px,#444145 36px 40px,#474543 40px 44px,#3a3b34 44px 48px,#3c3838 48px 52px,#464341 52px 56px,#383634 56px 60px,#3f4246 60px 64px,#30322b 64px 68px)"></div>
</div>
<div style="position:absolute;left:570px;top:725.5px;width:108px;height:12px;filter:blur(0.5px)">
<div style="height:4px;background:linear-gradient(90deg,#40423c 0px 4px,#4c4e53 4px 8px,#363836 8px 12px,#3b3838 12px 16px,#5a5755 16px 20px,#615b5c 20px 24px,#434043 24px 28px,#51575e 28px 32px,#47443f 32px 36px,#4d4f54 36px 40px,#3e3b41 40px 44px,#3c3a40 44px 48px,#4d4e53 48px 52px,#5d5c5b 52px 56px,#3d3c38 56px 60px,#4b474a 60px 64px,#3d3737 64px 68px,#3d3c35 68px 72px,#373b42 72px 76px,#454645 76px 80px,#40443f 80px 84px,#464843 84px 88px,#3a3c3d 88px 92px,#484249 92px 96px,#48444b 96px 100px,#3a3e40 100px 104px,#55585b 104px 108px)"></div>
<div style="height:4px;background:linear-gradient(90deg,#8a888e 0px 4px,#656964 4px 8px,#7b7c7c 8px 12px,#666065 12px 16px,#787276 16px 20px,#878c91 20px 24px,#777a75 24px 28px,#5b5f65 28px 32px,#83898d 32px 36px,#655f65 36px 40px,#7f837c 40px 44px,#888783 44px 48px,#838285 48px 52px,#636569 52px 56px,#6d6e6c 56px 60px,#868a8e 60px 64px,#6c7074 64px 68px,#767c78 68px 72px,#5b5855 72px 76px,#85847d 76px 80px,#62615a 80px 84px,#656b72 84px 88px,#8d8989 88px 92px,#5a5a55 92px 96px,#797d81 96px 100px,#858583 100px 104px,#5b5c5c 104px 108px)"></div>
<div style="height:4px;background:linear-gradient(90deg,#413c3d 0px 4px,#3f3a39 4px 8px,#464240 8px 12px,#414143 12px 16px,#33312f 16px 20px,#343937 20px 24px,#423f40 24px 28px,#353b42 28px 32px,#2b2f32 32px 36px,#454045 36px 40px,#3e3b3e 40px 44px,#47433d 44px 48px,#353732 48px 52px,#3e413a 52px 56px,#443f39 56px 60px,#343838 60px 64px,#3c3831 64px 68px,#34302a 68px 72px,#474641 72px 76px,#3e443f 76px 80px,#4b4848 80px 84px,#444241 84px 88px,#433f44 88px 92px,#383d3d 92px 96px,#474845 96px 100px,#332f28 100px 104px,#4d484b 104px 108px)"></div>
</div>
</body></html>
